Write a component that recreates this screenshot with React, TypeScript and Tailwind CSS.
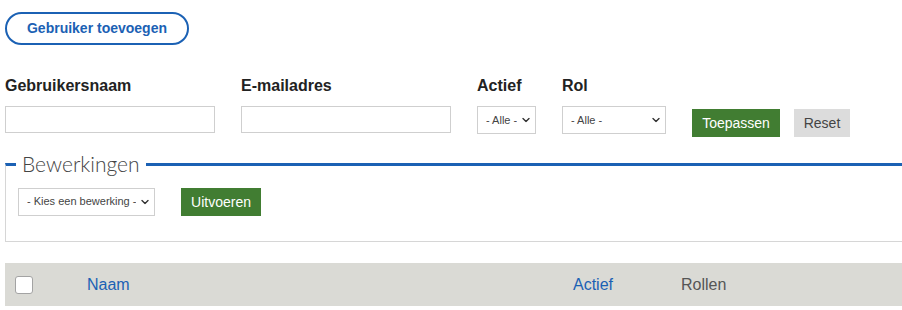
import { ReactNode } from "react";

const BLUE = "text-[#1b61b4]";

function Chevron() {
  return (
    <svg
      viewBox="0 0 8 5"
      className="pointer-events-none absolute right-[6px] top-1/2 h-[5px] w-[8px] -translate-y-1/2"
      fill="none"
      stroke="#333"
      strokeWidth="1.4"
      strokeLinecap="round"
      strokeLinejoin="round"
    >
      <path d="M1 1l3 3 3-3" />
    </svg>
  );
}

function Select({ width, options }: { width: string; options: string[] }) {
  return (
    <div className={`relative h-[28px] ${width}`}>
      <select className="h-full w-full appearance-none border border-[#cfcfcf] bg-white pl-[8px] pr-[18px] text-[11px] text-[#444] outline-none">
        {options.map((o) => (
          <option key={o}>{o}</option>
        ))}
      </select>
      <Chevron />
    </div>
  );
}

function Field({ label, children }: { label: string; children: ReactNode }) {
  return (
    <div className="flex flex-col">
      <label className="mb-[11px] text-[16px] font-bold leading-[18px] text-[#222]">
        {label}
      </label>
      {children}
    </div>
  );
}

export default function App() {
  return (
    <div className="min-h-[310px] bg-white pl-[5px] pt-[12px] font-['Liberation_Sans',Arial,sans-serif]">
      <button
        className={`h-[33px] w-[184px] rounded-full border-2 border-[#1b61b4] text-[14px] font-bold ${BLUE}`}
      >
        Gebruiker toevoegen
      </button>

      {/* filters */}
      <div className="mt-[32px] flex items-start gap-[26px]">
        <Field label="Gebruikersnaam">
          <input className="h-[27px] w-[210px] border border-[#cfcfcf] bg-white" />
        </Field>
        <Field label="E-mailadres">
          <input className="h-[27px] w-[210px] border border-[#cfcfcf] bg-white" />
        </Field>
        <Field label="Actief">
          <Select width="w-[59px]" options={["- Alle -"]} />
        </Field>
        <Field label="Rol">
          <Select width="w-[104px]" options={["- Alle -"]} />
        </Field>
        <div className="flex gap-[14px] pt-[32px]">
          <button className="h-[28px] w-[88px] bg-[#417d32] text-[14px] text-white">
            Toepassen
          </button>
          <button className="h-[28px] w-[56px] bg-[#dcdcdc] text-[14px] text-[#444]">
            Reset
          </button>
        </div>
      </div>

      {/* bulk operations */}
      <fieldset className="mt-[13px] border-b border-l border-r-0 border-t-[3px] border-b-[#d6d6d6] border-l-[#d6d6d6] border-t-[#1b61b4] pb-[25px] pl-[12px] pt-[9px]">
        <legend className="-ml-[2px] px-[6px] font-['Lato',sans-serif] text-[21px] font-light leading-[28px] text-[#444]">
          Bewerkingen
        </legend>
        <div className="flex items-center gap-[26px]">
          <Select width="w-[137px]" options={["- Kies een bewerking -"]} />
          <button className="mt-[1px] h-[28px] w-[80px] bg-[#417d32] text-[14px] text-white">
            Uitvoeren
          </button>
        </div>
      </fieldset>

      {/* table header */}
      <div className="mt-[21px] grid h-[43px] grid-cols-[72px_486px_108px_1fr] items-center bg-[#dadad5] pl-[10px] text-[16px]">
        <span className="h-[18px] w-[18px] rounded-[3px] border border-[#a3a3a3] bg-white" />
        <span className={BLUE}>Naam</span>
        <span className={BLUE}>Actief</span>
        <span className="text-[#555]">Rollen</span>
      </div>
    </div>
  );
}
